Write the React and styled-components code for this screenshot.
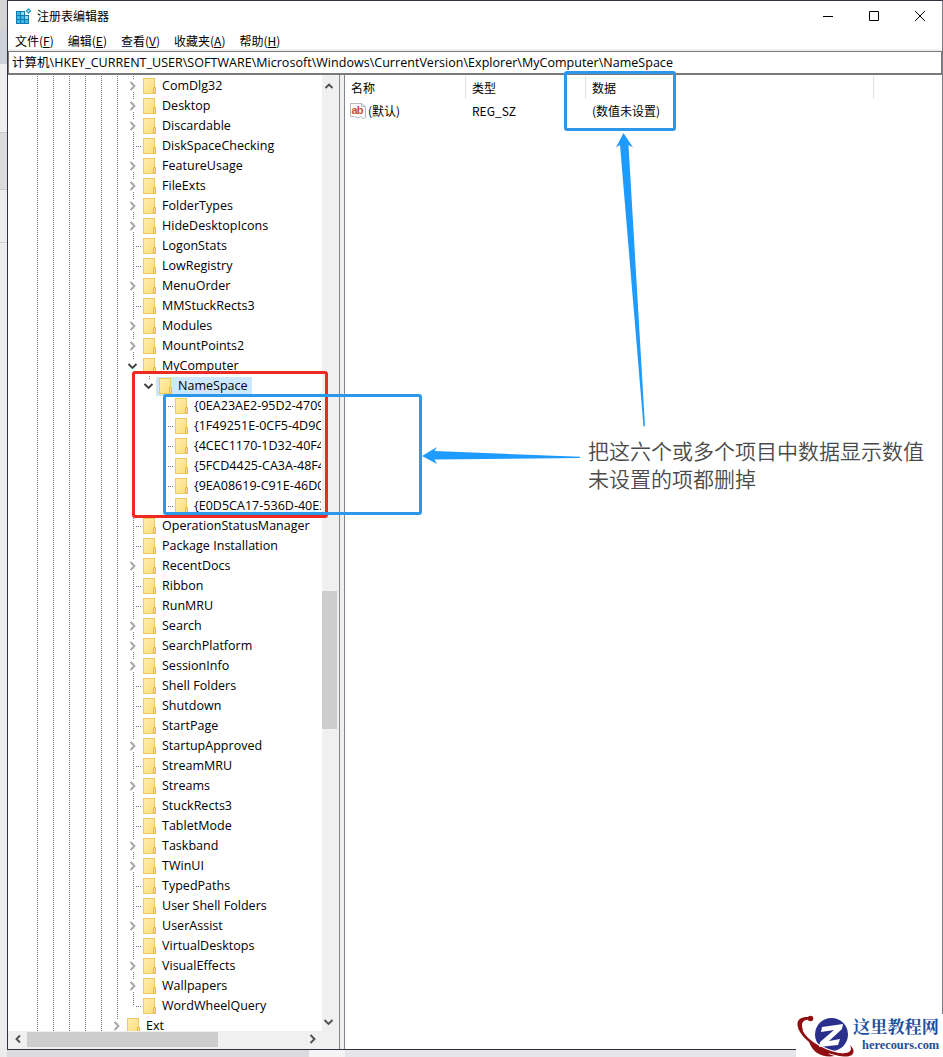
import React, { useState } from 'react';
import styled, { createGlobalStyle, css } from 'styled-components';

const GlobalStyle = createGlobalStyle`
  * {
    box-sizing: border-box;
  }
  body {
    margin: 0;
    background: #fff;
    font-family: "Open Sans", "Noto Sans CJK SC", sans-serif;
    font-size: 12.5px;
    color: #000;
  }
`;

const Desktop = styled.div`
  position: relative;
  width: 943px;
  height: 1057px;
  padding: 0 0 7px 7px;
  overflow: hidden;
  background:
    linear-gradient(90deg, #dcdcde 0 302px, #f4f4f4 302px 338px, #e4e6e8 338px) 7px 1050px no-repeat,
    linear-gradient(180deg, #d4d4d4 0 30px, #cdd1d9 30px 64px, #efefef 64px 132px, #c8c8c8 132px 133px, #dcdcdc 133px 189px, #c8c8c8 189px 190px, #ededed 190px 242px, #cfcfcf 242px 243px, #ececec 243px);
`;

const Window = styled.div`
  display: flex;
  flex-direction: column;
  height: 1050px;
  background: #fff;
  border: 1px solid #35303f;
  border-right-color: #7c7a86;
`;

const TitleBar = styled.div`
  display: flex;
  align-items: center;
  height: 30px;
  padding: 0 0 1px 8px;
  font-family: "Noto Sans CJK SC", sans-serif;
  font-size: 12px;
`;

const Title = styled.span`
  flex: 1;
  margin-left: 5px;
`;

const WindowButton = styled.span`
  display: flex;
  justify-content: center;
  width: 46px;

  &:last-child {
    width: 45px;
  }
`;

const MenuBar = styled.div`
  display: flex;
  align-items: center;
  gap: 14px;
  height: 20px;
  padding: 0 7px;
  border-bottom: 2px solid #f0f0f0;
  font-family: "Noto Sans CJK SC", sans-serif;
  font-size: 12px;
`;

const AddressBar = styled.div`
  display: flex;
  align-items: center;
  height: 24px;
  padding: 0 0 2px 3px;
  border: 1px solid #7a7a7a;
  border-bottom-width: 2px;
  letter-spacing: 0.03px;
  white-space: pre;
`;

const Panes = styled.div`
  display: flex;
  flex: 1;
  min-height: 0;
`;

const TreePane = styled.div`
  display: flex;
  flex-direction: column;
  width: 332px;
  border-right: 1px solid #828790;
`;

const TreeBody = styled.div`
  display: flex;
  height: 956px;
`;

const TreeList = styled.div`
  width: 313px;
  margin-right: 1px;
  padding-top: 1px;
  overflow: hidden;
`;

const dots = css`
  background-image: repeating-linear-gradient(180deg, #777 0 1px, transparent 1px 2px);
  background-repeat: no-repeat;
  background-position: 8px 0;
`;

const Row = styled.div`
  display: flex;
  align-items: center;
  height: 20px;
  padding-left: 21px;
  white-space: nowrap;
`;

const Guide = styled.span`
  flex: none;
  width: 16px;
  height: 20px;
  ${dots}
  background-size: ${p => (p.$blank ? '0 0' : '1px 100%')};
`;

const Expander = styled.span`
  display: flex;
  flex: none;
  align-items: center;
  justify-content: center;
  width: 16px;
  height: 20px;
  ${dots}
  background-size: 1px ${p => (p.$last ? '10px' : '100%')};

  svg {
    background: #fff;
  }
`;

const Stub = styled.span`
  width: 6px;
  height: 1px;
  margin-left: 9px;
  background: repeating-linear-gradient(90deg, transparent 0 1px, #777 1px 2px);
`;

const Entry = styled.span`
  display: flex;
  align-items: center;
  gap: 6px;
  height: 19px;
  margin-left: ${p => (p.$selected ? -1 : 2)}px;
  padding: ${p => (p.$selected ? '0 4px 0 3px' : 0)};
  background: ${p => (p.$selected ? '#cce8ff' : 'transparent')};
`;

const Label = styled.span`
  padding-bottom: 2px;
  line-height: 17px;
  letter-spacing: 0.02px;
`;

const ScrollBar = styled.div`
  display: flex;
  flex-direction: ${p => (p.$vertical ? 'column' : 'row')};
  align-items: ${p => (p.$vertical ? 'flex-start' : 'center')};
  justify-content: space-between;
  width: ${p => (p.$vertical ? '17px' : '314px')};
  height: ${p => (p.$vertical ? '956px' : '17px')};
  padding: ${p => (p.$vertical ? '5px 0 3px' : '0 3px 1px 4px')};
  background: #f0f0f0;

  svg {
    margin-left: ${p => (p.$vertical ? 1 : 0)}px;
  }
`;

const Thumb = styled.div`
  background: #cdcdcd;
  ${p => (p.$vertical
    ? 'width: 15px; height: 138px; margin-top: 212px;'
    : 'width: 191px; height: 15px; margin-right: 86px;')}
`;

const ScrollFooter = styled.div`
  flex: 1;
  background: #f0f0f0;
`;

const Splitter = styled.div`
  width: 5px;
  background: #f0f0f0;
  border-right: 1px solid #828790;
`;

const ValuePane = styled.div`
  flex: 1;
  font-family: "Noto Sans CJK SC", sans-serif;
  font-size: 12px;
`;

const ValueRow = styled.div`
  display: grid;
  grid-template-columns: 121px 120px 288px 1fr;
  align-items: center;
  height: ${p => (p.$header ? 24 : 22)}px;
`;

const Cell = styled.span`
  display: flex;
  align-items: center;
  gap: 2px;
  height: 23px;
  padding-left: ${p => (p.$icon ? 5 : 6)}px;
  border-right: 1px solid ${p => (p.$header ? '#e2e2e2' : 'transparent')};
`;

// marks drawn over the window
const Box = styled.div`
  position: absolute;
  left: ${p => p.$x}px;
  top: ${p => p.$y}px;
  width: ${p => p.$w}px;
  height: ${p => p.$h}px;
  border: 3px solid ${p => p.$color};
  border-radius: 3px;
`;

const Arrows = styled.svg`
  position: absolute;
  left: 0;
  top: 0;
  pointer-events: none;
`;

const Note = styled.div`
  position: absolute;
  left: 588px;
  top: 436px;
  width: 350px;
  font-family: "Noto Sans CJK SC", sans-serif;
  font-size: 21px;
  font-weight: 350;
  line-height: 28px;
  color: #4a4a4a;
`;

const Watermark = styled.div`
  position: absolute;
  right: 0;
  bottom: 0;
  display: flex;
  width: 147px;
  height: 43px;
  background: #fff;
`;

const SiteName = styled.div`
  margin-left: -1px;
  font-family: "Noto Serif CJK SC", "Noto Sans CJK SC", serif;
  font-size: 17.2px;
  font-weight: 700;
  line-height: 24px;
  color: #1c4f9c;
  white-space: nowrap;
`;

const SiteUrl = styled.div`
  margin-left: 9px;
  font-family: "Liberation Serif", serif;
  font-size: 12.4px;
  line-height: 14px;
`;

const BLUE = '#2d98ea';
const RED = '#ee2a20';

// [name, kind]: '+' collapsed, '-' expanded, '' leaf
const before = [
  ['ComDlg32', '+'], ['Desktop', '+'], ['Discardable', '+'], ['DiskSpaceChecking', ''],
  ['FeatureUsage', '+'], ['FileExts', '+'], ['FolderTypes', '+'], ['HideDesktopIcons', '+'],
  ['LogonStats', ''], ['LowRegistry', ''], ['MenuOrder', '+'], ['MMStuckRects3', ''],
  ['Modules', '+'], ['MountPoints2', '+'], ['MyComputer', '-'],
];

const guids = [
  '{0EA23AE2-95D2-4709', '{1F49251E-0CF5-4D9C', '{4CEC1170-1D32-40F4',
  '{5FCD4425-CA3A-48F4', '{9EA08619-C91E-46D0', '{E0D5CA17-536D-40E3',
];

const after = [
  ['OperationStatusManager', ''], ['Package Installation', ''], ['RecentDocs', '+'], ['Ribbon', ''],
  ['RunMRU', ''], ['Search', '+'], ['SearchPlatform', '+'], ['SessionInfo', '+'],
  ['Shell Folders', ''], ['Shutdown', ''], ['StartPage', ''], ['StartupApproved', '+'],
  ['StreamMRU', ''], ['Streams', '+'], ['StuckRects3', ''], ['TabletMode', ''],
  ['Taskband', '+'], ['TWinUI', '+'], ['TypedPaths', ''], ['User Shell Folders', ''],
  ['UserAssist', '+'], ['VirtualDesktops', ''], ['VisualEffects', '+'], ['Wallpapers', '+'],
  ['WordWheelQuery', ''],
];

const nodes = [
  ...before.map(([name, kind]) => ({ name, kind, depth: 6 })),
  { name: 'NameSpace', kind: '-', depth: 7, last: true },
  ...guids.map((name, i) => ({ name, kind: '', depth: 8, last: i === guids.length - 1 })),
  ...after.map(([name, kind]) => ({ name, kind, depth: 6, last: name === 'WordWheelQuery' })),
  { name: 'Ext', kind: '+', depth: 5 },
];

const menus = [['文件', 'F'], ['编辑', 'E'], ['查看', 'V'], ['收藏夹', 'A'], ['帮助', 'H']];

function Chevron({ dir, color = '#a6a6a6' }) {
  const d = {
    right: 'M3.5 2 L7.5 6 L3.5 10',
    left: 'M8 2.5 L4.5 6 L8 9.5',
    down: 'M1.5 4 L5.5 8 L9.5 4',
    up: 'M2.5 8 L6 4.5 L9.5 8',
  }[dir];
  return (
    <svg width="12" height="12" viewBox="0 0 12 12">
      <path d={d} fill="none" stroke={color} strokeWidth="1.9" />
    </svg>
  );
}

function Folder() {
  return (
    <svg width="13" height="16" viewBox="0 0 13 16">
      <defs>
        <linearGradient id="paper" x1="0" y1="0" x2="1" y2="1">
          <stop offset="0" stopColor="#ffefae" />
          <stop offset="1" stopColor="#fbdc78" />
        </linearGradient>
      </defs>
      <rect x="0.5" y="0.5" width="11" height="15" fill="url(#paper)" stroke="#eccb62" />
      <path d="M10.5 9.5h2v6h-2z" fill="#fbe28a" stroke="#e3bb44" />
    </svg>
  );
}

function RegeditIcon() {
  return (
    <svg width="16" height="16" viewBox="0 0 16 16">
      <rect x="0" y="3" width="13" height="13" fill="#1479ab" />
      {[0, 1, 2].map(r => [0, 1, 2].map(c => (
        (r > 0 || c < 2) &&
        <rect key={r + '_' + c} x={1 + c * 4} y={4 + r * 4} width="3" height="3" fill={c > r ? '#8be0f8' : '#39b9e6'} />
      )))}
      <path d="M9 3h4v4H9z" fill="#fff" />
      <path d="M12.5 0 L15.5 3 L12.5 6 L9.5 3z" fill="#2b9cc7" />
      <path d="M12.5 1.8 L13.7 3 L12.5 4.2 L11.3 3z" fill="#a5e6f7" />
    </svg>
  );
}

function StringIcon() {
  return (
    <svg width="16" height="16" viewBox="0 0 16 16">
      <path d="M0.5 0.5h11l4 3v11l-2 1-3-2-3 1.5-3-1.5-4 0z" fill="#fff" stroke="#b9b9b9" />
      <path d="M11.5 0.5v3h4" fill="none" stroke="#b9b9b9" />
      <text x="1.5" y="10.5" fontFamily="Liberation Sans" fontSize="11" fontWeight="700" fill="#c8502d" textLength="12">ab</text>
    </svg>
  );
}

function TreeNode({ node, selected, onSelect }) {
  return (
    <Row onClick={() => onSelect(node.name)}>
      {Array.from({ length: node.depth }, (_, i) => <Guide key={i} $blank={i === 7} />)}
      <Expander $last={node.last}>
        {node.kind === '+' && <Chevron dir="right" />}
        {node.kind === '-' && <Chevron dir="down" color="#404040" />}
        {node.kind === '' && <Stub />}
      </Expander>
      <Entry $selected={selected}>
        <Folder />
        <Label>{node.name}</Label>
      </Entry>
    </Row>
  );
}

function Logo() {
  return (
    <svg width="58" height="43" viewBox="0 0 58 43">
      <circle cx="35.5" cy="20.5" r="16.5" fill="#2b2f8c" />
      <path d="M14 6 C8 5 4 9 7 16 C12 27 32 38 48 39 C55 39 56 35 54 31 C61 38 57 43 48 42.500 C42 42 36 40 32 39 C34 41 36 41.500 39 42 C26 44 17 39 13 28 C8 24 2 17 1.500 11 C1 5 6 2.500 13 3z" fill="#8e0e12" />
      <circle cx="14.5" cy="4.5" r="2.8" fill="#8e0e12" />
      <path d="M7 16 C12 27 32 38 48 39" fill="none" stroke="#fff" strokeWidth="1.2" />
      <path d="M26 13 L47 10 L46 15 L33 27 L44 25 L42 31 L23 33 L24 28 L38 16 L25 18z" fill="#fff" />
    </svg>
  );
}

function App() {
  const [selected, setSelected] = useState('NameSpace');

  return (
    <Desktop>
      <GlobalStyle />
      <Window>
        <TitleBar>
          <RegeditIcon />
          <Title>注册表编辑器</Title>
          <WindowButton>
            <svg width="10" height="10"><path d="M0 5.5h10" stroke="#000" /></svg>
          </WindowButton>
          <WindowButton>
            <svg width="10" height="10"><path d="M0.5 0.5h9v9h-9z" fill="none" stroke="#000" /></svg>
          </WindowButton>
          <WindowButton>
            <svg width="10" height="10"><path d="M0 0L10 10M10 0L0 10" stroke="#000" /></svg>
          </WindowButton>
        </TitleBar>
        <MenuBar>
          {menus.map(([label, key]) => <span key={key}>{label}(<u>{key}</u>)</span>)}
        </MenuBar>
        <AddressBar>计算机\HKEY_CURRENT_USER\SOFTWARE\Microsoft\Windows\CurrentVersion\Explorer\MyComputer\NameSpace</AddressBar>
        <Panes>
          <TreePane>
            <TreeBody>
              <TreeList>
                {nodes.map(node => (
                  <TreeNode key={node.name} node={node} selected={node.name === selected} onSelect={setSelected} />
                ))}
              </TreeList>
              <ScrollBar $vertical>
                <Chevron dir="up" color="#505050" />
                <Thumb $vertical />
                <Chevron dir="down" color="#505050" />
              </ScrollBar>
            </TreeBody>
            <ScrollFooter>
              <ScrollBar>
                <Chevron dir="left" color="#505050" />
                <Thumb />
                <Chevron dir="right" color="#505050" />
              </ScrollBar>
            </ScrollFooter>
          </TreePane>
          <Splitter />
          <ValuePane>
            <ValueRow $header>
              <Cell $header>名称</Cell>
              <Cell $header>类型</Cell>
              <Cell $header>数据</Cell>
            </ValueRow>
            <ValueRow>
              <Cell $icon><StringIcon />(默认)</Cell>
              <Cell>REG_SZ</Cell>
              <Cell>(数值未设置)</Cell>
            </ValueRow>
          </ValuePane>
        </Panes>
      </Window>
      <Box $x={132} $y={371} $w={196} $h={147} $color={RED} />
      <Box $x={163} $y={394} $w={259} $h={121} $color={BLUE} />
      <Box $x={564} $y={71} $w={112} $h={60} $color={BLUE} />
      <Arrows width="943" height="1057">
        <path d="M422 456 L437 447 L434.5 451 L580 456.8 L580 458 L434.5 459.5 L437 464z" fill="#1e9bff" />
        <path d="M623.5 133 L633 147.5 L628.5 145 L645 426 L643.5 426.5 L620 145 L616 147.5z" fill="#1e9bff" />
      </Arrows>
      <Note>把这六个或多个项目中数据显示数值未设置的项都删掉</Note>
      <Watermark>
        <Logo />
        <SiteName>
          这里教程网
          <SiteUrl>herecours.com</SiteUrl>
        </SiteName>
      </Watermark>
    </Desktop>
  );
}

export default App;
